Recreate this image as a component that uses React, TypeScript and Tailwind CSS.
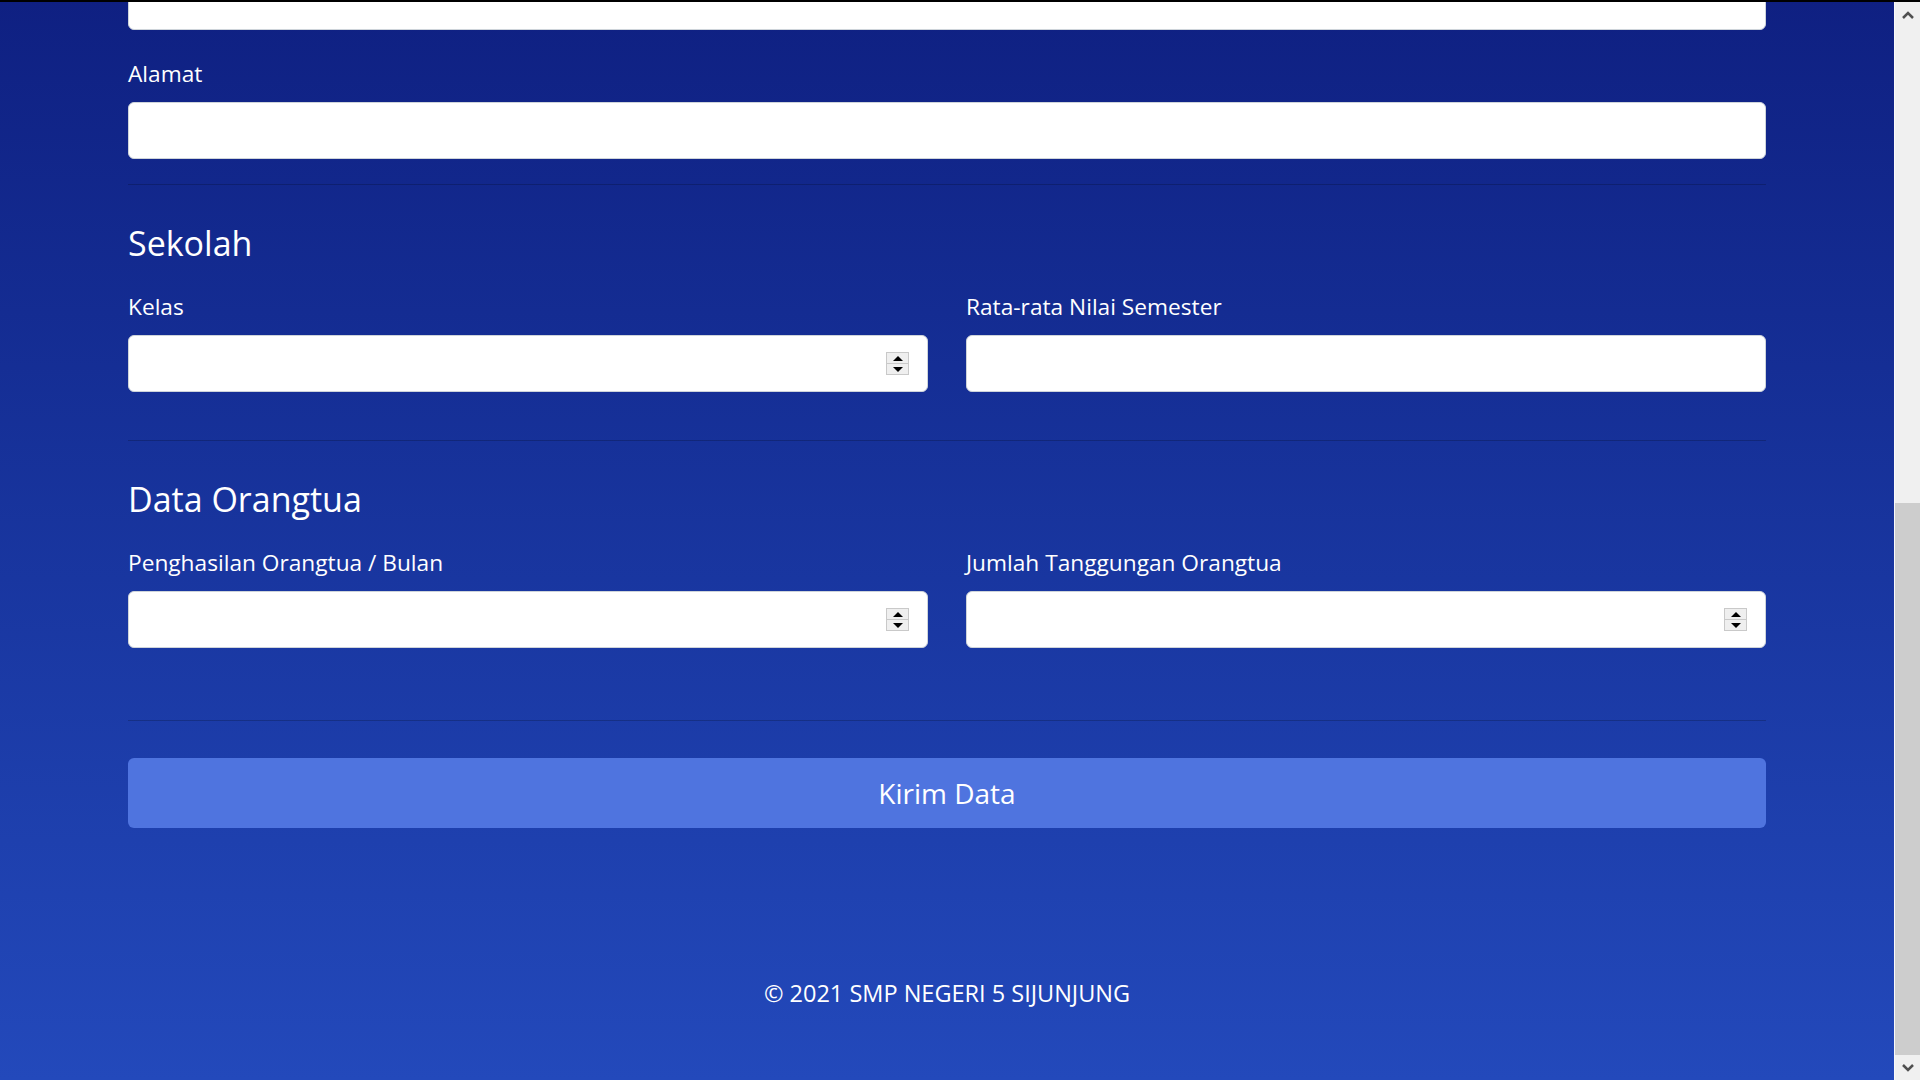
import React from "react";

const font = { fontFamily: '"Open Sans", "Noto Sans", Arial, sans-serif' };

function Spinner() {
  return (
    <div className="mr-[18px] flex h-[23px] w-[23px] flex-col border border-[#c9c9c9] bg-[#efefef]">
      <div className="flex flex-1 items-center justify-center border-b border-[#c9c9c9]">
        <svg width="10" height="5" viewBox="0 0 10 5">
          <polygon points="5,0 10,5 0,5" fill="#000" />
        </svg>
      </div>
      <div className="flex flex-1 items-center justify-center">
        <svg width="10" height="5" viewBox="0 0 10 5">
          <polygon points="0,0 10,0 5,5" fill="#000" />
        </svg>
      </div>
    </div>
  );
}

function Field({ label, number = false }: { label: string; number?: boolean }) {
  return (
    <div className="flex flex-col">
      <label className="mb-[10px] block pt-[2px] text-[22.7px] leading-[36px] text-white">{label}</label>
      <div className="flex h-[57px] items-center rounded-[6px] border-[1.5px] border-[#ced4da] bg-white">
        <input className="h-full flex-1 bg-transparent px-[18px] text-[23px] outline-none" />
        {number && <Spinner />}
      </div>
    </div>
  );
}

function Divider() {
  return <div className="h-px w-full bg-black/20" />;
}

function Heading({ children }: { children: React.ReactNode }) {
  return <h4 className="mb-[22px] mt-[13px] text-[34px] leading-[43px] text-white">{children}</h4>;
}

function Scrollbar() {
  return (
    <aside className="flex w-[26px] flex-col border-l border-[#fafafa] bg-[#f0f0f0]">
      <div className="flex h-[25px] items-center justify-center">
        <svg width="12" height="8" viewBox="0 0 12 8">
          <path d="M1 7 L6 2 L11 7" stroke="#505050" strokeWidth="2.5" fill="none" />
        </svg>
      </div>
      <div className="flex flex-1 flex-col">
        <div className="flex-1" />
        <div className="h-[552px] bg-[#cdcdcd]" />
      </div>
      <div className="flex h-[25px] items-center justify-center">
        <svg width="12" height="8" viewBox="0 0 12 8">
          <path d="M1 1 L6 6 L11 1" stroke="#505050" strokeWidth="2.5" fill="none" />
        </svg>
      </div>
    </aside>
  );
}

export default function App() {
  return (
    <div className="flex h-screen w-full overflow-hidden bg-black pt-[2px]" style={font}>
      <main className="flex flex-1 flex-col overflow-hidden bg-gradient-to-b from-[#0f2082] to-[#2349bb]">
        <div className="mx-auto flex w-[1638px] flex-col">
          <div className="mt-[-29px] h-[57px] rounded-[6px] border-[1.5px] border-[#ced4da] bg-white" />
          <div className="mt-[24px]">
            <Field label="Alamat" />
          </div>
          <div className="mt-[25px]">
            <Divider />
          </div>

          <div className="mt-[24px]">
            <Heading>Sekolah</Heading>
            <div className="grid grid-cols-2 gap-x-[38px]">
              <Field label="Kelas" number />
              <Field label="Rata-rata Nilai Semester" />
            </div>
          </div>
          <div className="mt-[48px]">
            <Divider />
          </div>

          <div className="mt-[24px]">
            <Heading>Data Orangtua</Heading>
            <div className="grid grid-cols-2 gap-x-[38px]">
              <Field label="Penghasilan Orangtua / Bulan" number />
              <Field label="Jumlah Tanggungan Orangtua" number />
            </div>
          </div>
          <div className="mt-[72px]">
            <Divider />
          </div>

          <button className="mt-[37px] h-[70px] w-full rounded-[6px] bg-[#4f74df] text-[28px] text-white">
            Kirim Data
          </button>
        </div>

        <footer className="mt-auto mb-[69px] text-center text-[23.5px] leading-[36px] text-white">
          © 2021 SMP NEGERI 5 SIJUNJUNG
        </footer>
      </main>
      <Scrollbar />
    </div>
  );
}
